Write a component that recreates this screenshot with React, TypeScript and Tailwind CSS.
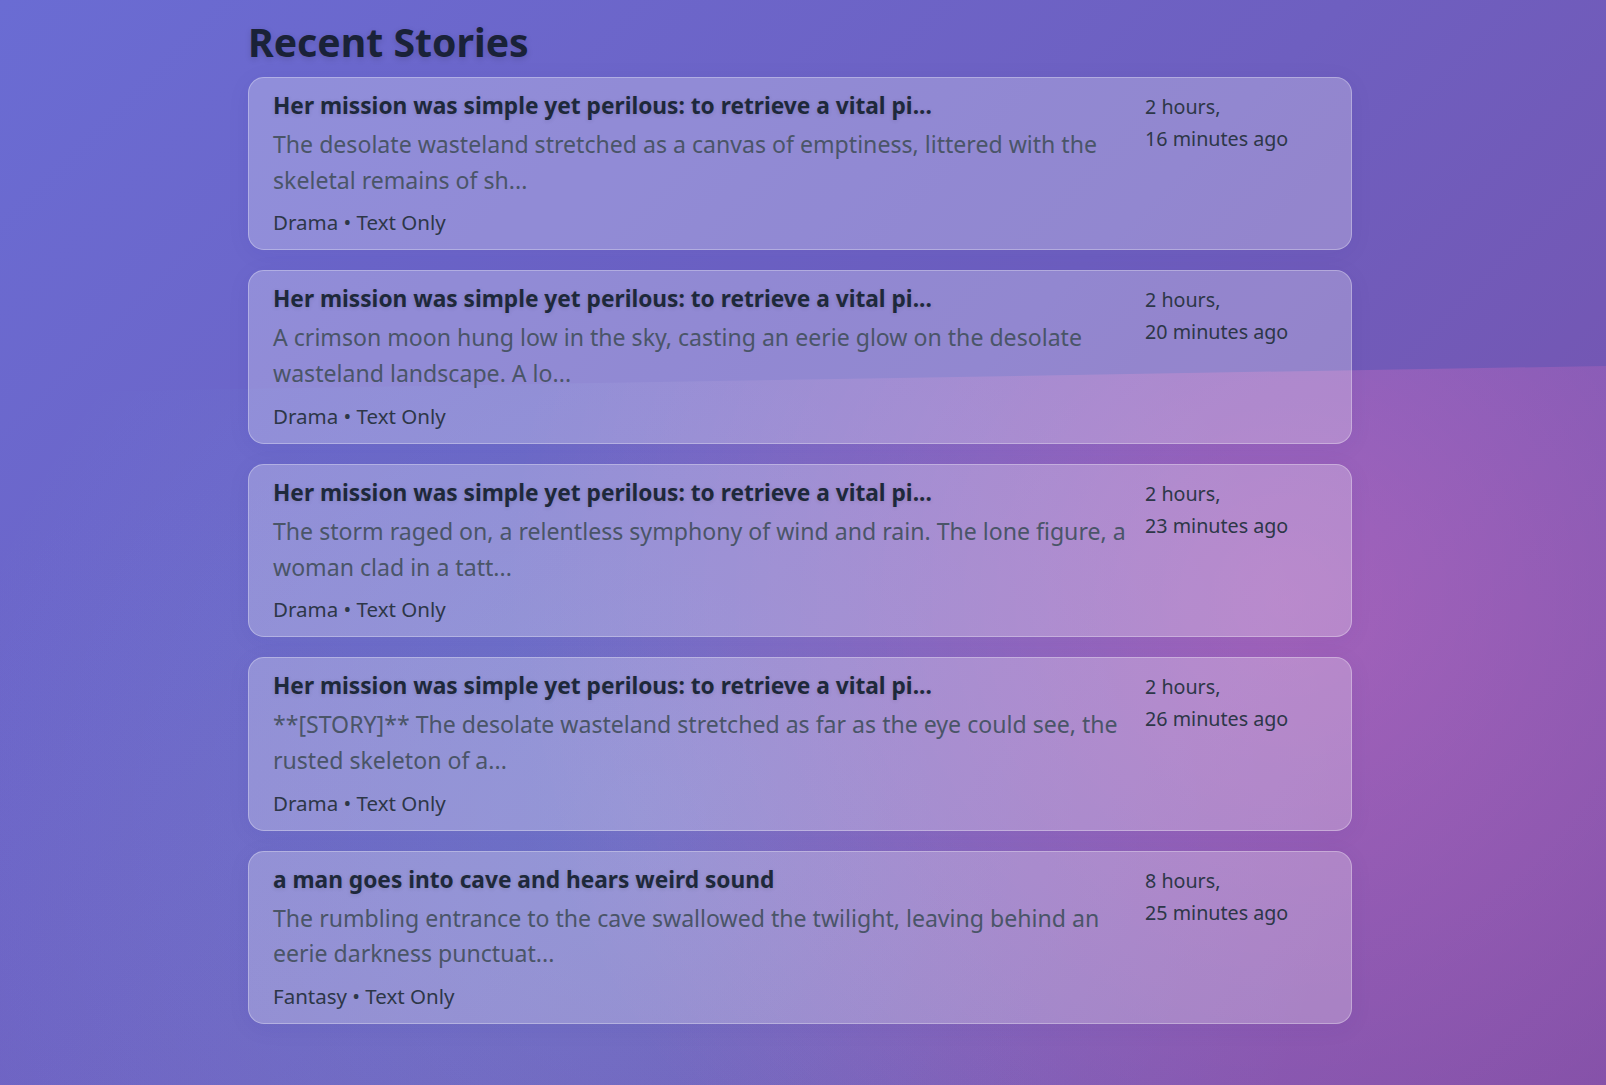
import React from "react";

type Story = {
  title: string;
  excerpt: string;
  genre: string;
  hours: string;
  minutes: string;
};

const stories: Story[] = [
  {
    title: "Her mission was simple yet perilous: to retrieve a vital pi...",
    excerpt:
      "The desolate wasteland stretched as a canvas of emptiness, littered with the skeletal remains of sh...",
    genre: "Drama",
    hours: "2\u00a0hours,",
    minutes: "16\u00a0minutes ago",
  },
  {
    title: "Her mission was simple yet perilous: to retrieve a vital pi...",
    excerpt:
      "A crimson moon hung low in the sky, casting an eerie glow on the desolate wasteland landscape. A lo...",
    genre: "Drama",
    hours: "2\u00a0hours,",
    minutes: "20\u00a0minutes ago",
  },
  {
    title: "Her mission was simple yet perilous: to retrieve a vital pi...",
    excerpt:
      "The storm raged on, a relentless symphony of wind and rain. The lone figure, a woman clad in a tatt...",
    genre: "Drama",
    hours: "2\u00a0hours,",
    minutes: "23\u00a0minutes ago",
  },
  {
    title: "Her mission was simple yet perilous: to retrieve a vital pi...",
    excerpt:
      "**[STORY]** The desolate wasteland stretched as far as the eye could see, the rusted skeleton of a...",
    genre: "Drama",
    hours: "2\u00a0hours,",
    minutes: "26\u00a0minutes ago",
  },
  {
    title: "a man goes into cave and hears weird sound",
    excerpt:
      "The rumbling entrance to the cave swallowed the twilight, leaving behind an eerie darkness punctuat...",
    genre: "Fantasy",
    hours: "8\u00a0hours,",
    minutes: "25\u00a0minutes ago",
  },
];

function StoryCard({ story }: { story: Story }) {
  return (
    <div className="flex gap-4 rounded-2xl border border-white/30 bg-white/25 px-6 pb-[13px] pt-[14px] shadow-[0_4px_24px_rgba(31,38,135,0.06)]">
      <div className="min-w-0 flex-1">
        <h3 className="text-[22.7px] font-bold leading-[28px] text-[#1e293b] [text-shadow:0_1px_4px_rgba(0,0,0,0.12)]">
          {story.title}
        </h3>
        <p className="mt-[7px] text-[23.1px] leading-[35.7px] text-[#4a5568]">
          {story.excerpt}
        </p>
        <div className="mt-[10px] text-[20.5px] leading-[28px] text-[#2d3748]">
          {story.genre} • Text Only
        </div>
      </div>
      <div className="-mt-px w-[182px] shrink-0 text-[19.7px] leading-[32px] text-[#2d3748]">
        {story.hours} {story.minutes}
      </div>
    </div>
  );
}

export default function App() {
  return (
    <div
      className="relative min-h-screen overflow-hidden bg-[linear-gradient(135deg,#6a6cd3_0%,#6e5fc0_50%,#7a4ea6_100%)]"
      style={{ fontFamily: '"Noto Sans", "Open Sans", sans-serif' }}
    >
      <div
        aria-hidden="true"
        className="pointer-events-none absolute inset-0 [clip-path:polygon(0_393px,100%_366px,100%_100%,0_100%)] bg-[radial-gradient(circle_at_1285px_600px,rgba(255,119,198,0.34)_0%,rgba(255,119,198,0)_780px),radial-gradient(circle_at_642px_815px,rgba(120,219,255,0.16)_0%,rgba(120,219,255,0)_700px),radial-gradient(circle_at_320px_1250px,rgba(120,119,198,0.25)_0%,rgba(120,119,198,0)_780px)]"
      />
      <main className="relative flex justify-center pr-[6px]">
        <div className="w-[1104px] pb-10 pt-[18px]">
          <h2 className="mb-[11px] text-[39.2px] font-bold leading-[48px] text-[#1a2238] [text-shadow:0_2px_6px_rgba(0,0,0,0.15)]">
            Recent Stories
          </h2>
          <div className="flex flex-col gap-5">
            {stories.map((s, i) => (
              <StoryCard key={i} story={s} />
            ))}
          </div>
        </div>
      </main>
    </div>
  );
}
